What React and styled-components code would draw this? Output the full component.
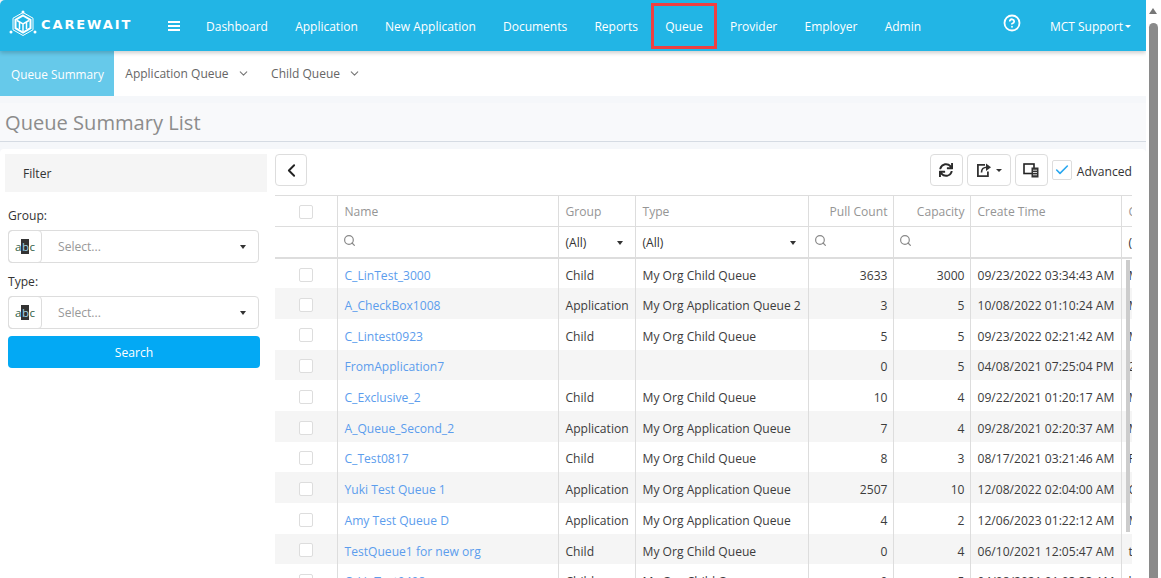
import React from "react";
import styled, { createGlobalStyle } from "styled-components";
import { FaSync } from "react-icons/fa";
import { LuCheck, LuChevronDown, LuChevronLeft, LuSearch, LuCircleHelp } from "react-icons/lu";

const GlobalStyle = createGlobalStyle`
  html, body {
    margin: 0;
    padding: 0;
    height: 100%;
    overflow: hidden;
    background: #fff;
  }
  * { box-sizing: border-box; }
  body {
    font-family: "Open Sans", "Noto Sans", sans-serif;
    font-size: 12.1px;
    color: #333;
  }
`;

const NAV = ["Dashboard", "Application", "New Application", "Documents", "Reports", "Queue", "Provider", "Employer", "Admin"];

const ROWS = [
  ["C_LinTest_3000", "Child", "My Org Child Queue", 3633, 3000, "09/23/2022 03:34:43 AM", "M"],
  ["A_CheckBox1008", "Application", "My Org Application Queue 2", 3, 5, "10/08/2022 01:10:24 AM", "M"],
  ["C_Lintest0923", "Child", "My Org Child Queue", 5, 5, "09/23/2022 02:21:42 AM", "M"],
  ["FromApplication7", "", "", 0, 5, "04/08/2021 07:25:04 PM", "2"],
  ["C_Exclusive_2", "Child", "My Org Child Queue", 10, 4, "09/22/2021 01:20:17 AM", "M"],
  ["A_Queue_Second_2", "Application", "My Org Application Queue", 7, 4, "09/28/2021 02:20:37 AM", "M"],
  ["C_Test0817", "Child", "My Org Child Queue", 8, 3, "08/17/2021 03:21:46 AM", "F"],
  ["Yuki Test Queue 1", "Application", "My Org Application Queue", 2507, 10, "12/08/2022 02:04:00 AM", "C"],
  ["Amy Test Queue D", "Application", "My Org Application Queue", 4, 2, "12/06/2023 01:22:12 AM", "M"],
  ["TestQueue1 for new org", "Child", "My Org Child Queue", 0, 4, "06/10/2021 12:05:47 AM", "t"],
  ["C_LinTest0408", "Child", "My Org Child Queue", 0, 5, "04/08/2021 01:03:33 AM", "l"],
];

function Logo() {
  return (
    <svg width="28" height="28" viewBox="0 0 28 28" fill="none" stroke="#fff">
      <path d="M14 2.500l10 5.700v11.600L14 25.500 4 19.800V8.200z" strokeWidth="1" />
      <path d="M14 5.500l7.500 4.300v8.400L14 22.500l-7.500-4.300V9.800z" strokeWidth="2" />
      <path d="M8 10.500l6 3.500 6-3.500M14 14v7.500M10.500 12.500v6.500M17.500 12.500v6.500" strokeWidth="1.500" />
      <circle cx="14" cy="2" r="1.500" fill="#fff" stroke="none" />
      <circle cx="2" cy="22" r="1.500" fill="#fff" stroke="none" />
      <circle cx="26" cy="22" r="1.500" fill="#fff" stroke="none" />
    </svg>
  );
}

function ExportIcon() {
  return (
    <svg width="16" height="16" viewBox="0 0 16 16" fill="none" stroke="#333" strokeWidth="1.800">
      <path d="M9 2.800H1.900v11.300h10V9.500" />
      <path d="M5.500 10.500c0-3.500 2-5.200 5.500-5.200" strokeWidth="1.600" />
      <path d="M10 1.600l5 3.700-5 3.700z" fill="#333" stroke="none" />
    </svg>
  );
}

function ColumnsIcon() {
  return (
    <svg width="16" height="15" viewBox="0 0 16 15" fill="none">
      <rect x="1" y="1" width="10" height="9.500" stroke="#222" strokeWidth="1.600" />
      <rect x="8.500" y="4.500" width="7" height="10" fill="#333" />
      <path d="M10 7.200h4M10 9.500h4M10 11.800h4" stroke="#fff" strokeWidth="0.800" />
    </svg>
  );
}

function FilterSelect({ label }) {
  return (
    <Field>
      <FieldLabel>{label}</FieldLabel>
      <SelectBox>
        <AbcCell>
          <AbcMark>
            a<b>b</b>c
          </AbcMark>
        </AbcCell>
        <SelectText>Select...</SelectText>
        <Caret />
      </SelectBox>
    </Field>
  );
}

export default function App() {
  return (
    <Page>
      <GlobalStyle />
      <Main>
        <TopBar>
          <Brand>
            <Logo />
            <BrandName>CAREWAIT</BrandName>
          </Brand>
          <Burger>
            <span />
            <span />
            <span />
          </Burger>
          <NavList>
            {NAV.map((item) => (
              <NavItem key={item} $marked={item === "Queue"}>
                {item}
              </NavItem>
            ))}
          </NavList>
          <HelpIcon>
            <LuCircleHelp size={18} strokeWidth={2.4} />
          </HelpIcon>
          <UserMenu>
            MCT Support
            <SmallCaret />
          </UserMenu>
        </TopBar>

        <SubNav>
          <SubTab $active>Queue Summary</SubTab>
          <SubTab>
            Application Queue
            <LuChevronDown size={13} />
          </SubTab>
          <SubTab>
            Child Queue
            <LuChevronDown size={13} />
          </SubTab>
        </SubNav>

        <TitleBar>Queue Summary List</TitleBar>

        <Content>
          <FilterPanel>
            <FilterHead>Filter</FilterHead>
            <FilterSelect label="Group:" />
            <FilterSelect label="Type:" />
            <SearchButton>Search</SearchButton>
          </FilterPanel>

          <GridPanel>
            <Toolbar>
              <ToolButton $w={32}>
                <LuChevronLeft size={21} strokeWidth={2.2} color="#222" />
              </ToolButton>
              <ToolGroup>
                <ToolButton $w={33}>
                  <FaSync size={14} color="#2b2b2b" />
                </ToolButton>
                <ToolButton $w={44}>
                  <ExportIcon />
                  <SmallCaret $dark />
                </ToolButton>
                <ToolButton $w={33}>
                  <ColumnsIcon />
                </ToolButton>
                <AdvancedBox>
                  <LuCheck size={16} strokeWidth={2.4} color="#2aa8f0" />
                </AdvancedBox>
                <AdvancedLabel>Advanced</AdvancedLabel>
              </ToolGroup>
            </Toolbar>

            <GridWrap>
              <Grid>
                <colgroup>
                  <col width="62" />
                  <col width="221" />
                  <col width="77" />
                  <col width="173" />
                  <col width="85" />
                  <col width="77" />
                  <col width="151" />
                  <col width="11" />
                </colgroup>
                <thead>
                  <HeadRow>
                    <HeadCell $center>
                      <Check />
                    </HeadCell>
                    <HeadCell>Name</HeadCell>
                    <HeadCell>Group</HeadCell>
                    <HeadCell>Type</HeadCell>
                    <HeadCell $right>Pull Count</HeadCell>
                    <HeadCell $right>Capacity</HeadCell>
                    <HeadCell>Create Time</HeadCell>
                    <HeadCell>C</HeadCell>
                  </HeadRow>
                  <FilterRow>
                    <FilterCell />
                    <FilterCell>
                      <SearchGlyph />
                    </FilterCell>
                    <FilterCell>
                      <AllPick>
                        (All)
                        <Caret />
                      </AllPick>
                    </FilterCell>
                    <FilterCell>
                      <AllPick>
                        (All)
                        <Caret />
                      </AllPick>
                    </FilterCell>
                    <FilterCell>
                      <SearchGlyph />
                    </FilterCell>
                    <FilterCell>
                      <SearchGlyph />
                    </FilterCell>
                    <FilterCell />
                    <FilterCell>(</FilterCell>
                  </FilterRow>
                </thead>
                <tbody>
                  {ROWS.map((row) => (
                    <BodyRow key={row[0]}>
                      <CheckCell>
                        <Check />
                      </CheckCell>
                      <BodyCell>
                        <QueueLink>{row[0]}</QueueLink>
                      </BodyCell>
                      <BodyCell>{row[1]}</BodyCell>
                      <BodyCell>{row[2]}</BodyCell>
                      <BodyCell $right>{row[3]}</BodyCell>
                      <BodyCell $right>{row[4]}</BodyCell>
                      <BodyCell>{row[5]}</BodyCell>
                      <BodyCell>{row[6]}</BodyCell>
                    </BodyRow>
                  ))}
                </tbody>
              </Grid>
              <GridThumb />
            </GridWrap>
          </GridPanel>
        </Content>
      </Main>

      <PageScroll>
        <ScrollArrow />
        <ScrollThumb />
      </PageScroll>
    </Page>
  );
}

const Page = styled.div`
  display: flex;
  width: 1161px;
  height: 578px;
  overflow: hidden;
`;

const Main = styled.main`
  width: 1146px;
  height: 578px;
  background: #f5f7fa;
  display: flex;
  flex-direction: column;
  overflow: hidden;
`;

const TopBar = styled.header`
  height: 51px;
  flex: none;
  background: #22b5e5;
  display: flex;
  align-items: center;
  color: #fff;
  box-shadow: 0 2px 4px rgba(0, 0, 0, 0.2);
  border-top-left-radius: 5px;
  position: relative;
  z-index: 2;
`;

const Brand = styled.div`
  width: 168px;
  padding: 0 0 3px 9px;
  display: flex;
  align-items: center;
  gap: 4px;
`;

const BrandName = styled.span`
  font-family: "DejaVu Sans", sans-serif;
  font-weight: 700;
  font-size: 13px;
  letter-spacing: 1.900px;
`;

const Burger = styled.div`
  width: 12px;
  display: flex;
  flex-direction: column;
  gap: 2px;
  margin-top: 1px;

  span {
    height: 2px;
    background: #fff;
  }
`;

const NavList = styled.nav`
  display: flex;
  align-items: center;
  margin: 2px 0 0 26px;
  gap: 27.2px;
  flex: 1;
`;

const NavItem = styled.a`
  font-size: 12px;
  position: relative;
  white-space: nowrap;

  ${(p) =>
    p.$marked &&
    `
    &::after {
      content: "";
      position: absolute;
      left: -14px;
      right: -14px;
      top: -15px;
      height: 40px;
      border: 3px solid #f04040;
    }
  `}
`;

const HelpIcon = styled.span`
  display: flex;
  margin-right: 29px;
  margin-top: -5px;
`;

const UserMenu = styled.span`
  font-size: 12px;
  margin: 2px 15px 0 0;
  display: flex;
  align-items: center;
  gap: 2px;
`;

const SmallCaret = styled.i`
  width: 0;
  height: 0;
  border-left: 3.500px solid transparent;
  border-right: 3.500px solid transparent;
  border-top: 3.500px solid ${(p) => (p.$dark ? "#333" : "#fff")};
`;

const SubNav = styled.div`
  height: 45px;
  flex: none;
  background: #fff;
  display: flex;
`;

const SubTab = styled.a`
  height: 45px;
  min-width: ${(p) => (p.$active ? "114px" : 0)};
  padding: 0 10.5px 0 11px;
  display: flex;
  align-items: center;
  gap: 8px;
  font-size: ${(p) => (p.$active ? "11.8px" : "12px")};
  color: ${(p) => (p.$active ? "#fff" : "#666")};
  background: ${(p) => (p.$active ? "#66c9ea" : "transparent")};

  svg {
    color: #777;
  }
`;

const TitleBar = styled.h1`
  margin: 7px 0 0;
  height: 39px;
  flex: none;
  padding-left: 5px;
  display: flex;
  align-items: center;
  background: #f8f9fb;
  border-bottom: 1px solid #d5dbe3;
  font-size: 20.1px;
  font-weight: 400;
  color: #8c8c8c;
`;

const Content = styled.section`
  margin-top: 7px;
  flex: 1;
  min-height: 0;
  background: #fff;
  display: flex;
  padding-left: 5px;
  padding-top: 5px;
  border-radius: 4px 4px 0 0;
`;

const FilterPanel = styled.aside`
  width: 262px;
  flex: none;
`;

const FilterHead = styled.div`
  height: 38px;
  background: #f5f5f5;
  display: flex;
  align-items: center;
  padding-left: 18px;
  color: #333;
`;

const Field = styled.div`
  padding: 14px 0 0 3px;

  & + & {
    padding-top: 9px;
  }
`;

const FieldLabel = styled.div`
  height: 18px;
  line-height: 20px;
  margin-bottom: 6px;
  color: #333;
`;

const SelectBox = styled.div`
  width: 251px;
  height: 33px;
  border: 1px solid #ddd;
  border-radius: 4px;
  display: flex;
  align-items: center;
  padding-right: 12px;
`;

const AbcCell = styled.div`
  width: 34px;
  height: 33px;
  margin-left: -1px;
  border: 1px solid #ddd;
  border-radius: 4px;
  display: flex;
  align-items: center;
  justify-content: center;
`;

const AbcMark = styled.span`
  font-size: 11.5px;
  color: #2f6048;

  b {
    background: #333;
    color: #9fd4e8;
    font-weight: 400;
    padding: 0 0.5px;
  }
`;

const SelectText = styled.span`
  flex: 1;
  padding-left: 16px;
  color: #999;
`;

const Caret = styled.i`
  width: 0;
  height: 0;
  border-left: 3.500px solid transparent;
  border-right: 3.500px solid transparent;
  border-top: 4px solid #333;
`;

const SearchButton = styled.button`
  display: block;
  margin: 7px 0 0 3px;
  width: 252px;
  height: 32px;
  border: 0;
  border-radius: 4px;
  background: #03a9f4;
  color: #fff;
  font: inherit;
`;

const GridPanel = styled.div`
  margin-left: 8px;
  width: 857px;
  flex: none;
  min-width: 0;
`;

const Toolbar = styled.div`
  height: 41px;
  display: flex;
  justify-content: space-between;
  align-items: flex-start;
`;

const ToolGroup = styled.div`
  display: flex;
  align-items: center;
  gap: 4px;
`;

const ToolButton = styled.button`
  width: ${(p) => p.$w}px;
  height: 32px;
  padding: 0;
  background: #fff;
  border: 1px solid #ddd;
  border-radius: 4px;
  display: flex;
  align-items: center;
  justify-content: center;
  gap: 4px;
`;

const AdvancedBox = styled.span`
  width: 20px;
  height: 20px;
  border: 1px solid #ddd;
  border-radius: 2px;
  display: flex;
  align-items: center;
  justify-content: center;
`;

const AdvancedLabel = styled.span`
  color: #333;
  margin-left: 1px;
  padding-top: 2px;
`;

const GridWrap = styled.div`
  position: relative;
`;

const Grid = styled.table`
  table-layout: fixed;
  width: 857px;
  border-collapse: collapse;
  border-top: 1px solid #ddd;
`;

const HeadRow = styled.tr`
  height: 31px;
`;

const HeadCell = styled.th`
  padding: 0 ${(p) => (p.$right ? "5px" : "7px")} 0 7px;
  font-weight: 400;
  color: #959595;
  border-left: 1px solid #ddd;
  border-bottom: 1px solid #ddd;
  overflow: hidden;
  white-space: nowrap;
  text-align: ${(p) => (p.$center ? "center" : p.$right ? "right" : "left")};

  &:first-child {
    border-left: 0;
  }
`;

const FilterRow = styled.tr`
  height: 31px;
`;

const FilterCell = styled.th`
  padding: 2px 7px 0;
  font-weight: 400;
  color: #333;
  text-align: left;
  border-left: 1px solid #ddd;
  border-bottom: 2px solid #ddd;
  overflow: hidden;

  &:first-child {
    border-left: 0;
  }
`;

const SearchGlyph = styled(LuSearch).attrs({ size: 13, strokeWidth: 2.2 })`
  color: #888;
  display: block;
  margin: -5px 0 0 -2px;
`;

const AllPick = styled.div`
  display: flex;
  align-items: center;
  justify-content: space-between;
  padding-right: 5px;
`;

const BodyRow = styled.tr`
  height: 30.7px;

  &:nth-child(even) {
    background: #f5f5f5;
  }
`;

const BodyCell = styled.td`
  padding: 4px ${(p) => (p.$right ? "5px" : "7px")} 0 7px;
  border-left: 1px solid #ddd;
  overflow: hidden;
  white-space: nowrap;
  color: #3c3c3c;
  text-align: ${(p) => (p.$right ? "right" : "left")};
`;

const CheckCell = styled.td`
  padding: 0;
  text-align: center;
`;

const QueueLink = styled.a`
  color: #5c9ded;
`;

const Check = styled.span`
  display: inline-block;
  width: 14px;
  height: 14px;
  background: #fff;
  border: 1px solid #ddd;
  border-radius: 2px;
  vertical-align: middle;
`;

const GridThumb = styled.div`
  position: absolute;
  right: 2px;
  top: 65px;
  width: 4px;
  height: 272px;
  background: #ccc;
`;

const PageScroll = styled.div`
  width: 15px;
  flex: none;
  background: #fff;
  padding: 8px 3px 0;
`;

const ScrollArrow = styled.div`
  width: 0;
  height: 0;
  border-left: 4.500px solid transparent;
  border-right: 4.500px solid transparent;
  border-bottom: 6px solid #777;
`;

const ScrollThumb = styled.div`
  margin-top: 9px;
  width: 9px;
  height: 560px;
  background: #8a8a8a;
  border-radius: 5px 5px 0 0;
`;
